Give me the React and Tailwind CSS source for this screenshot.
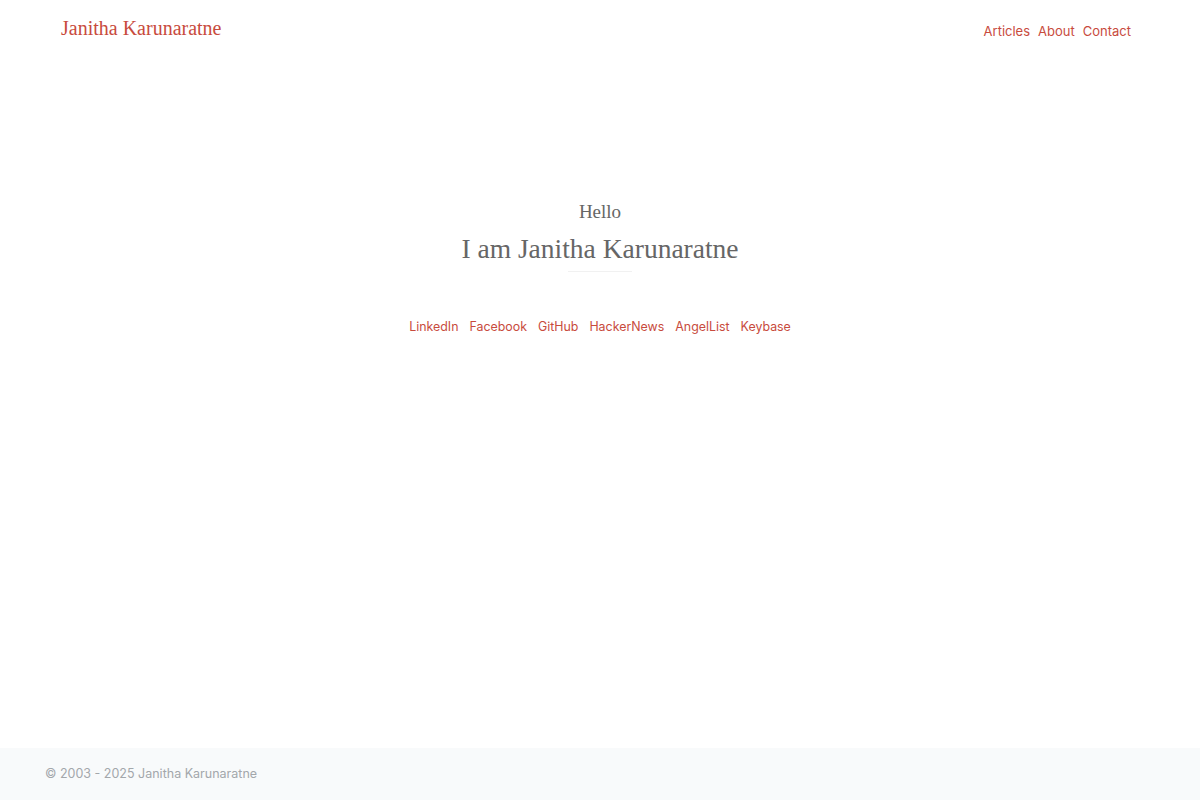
const sans = { fontFamily: "Inter, 'Noto Sans', sans-serif" };
const serif = { fontFamily: "'Liberation Serif', 'DejaVu Serif', serif" };

const links = ["LinkedIn", "Facebook", "GitHub", "HackerNews", "AngelList", "Keybase"];

export default function App() {
  return (
    <div className="min-h-screen flex flex-col bg-white" style={sans}>
      <header className="flex items-start justify-between pl-[61px] pr-[69px] pt-[13px]">
        <a href="#" className="text-[20px] text-[#c84b3d]" style={serif}>
          Janitha Karunaratne
        </a>
        <nav className="flex gap-2 pt-[9px] text-[13px] text-[#c84b3d]">
          <a href="#">Articles</a>
          <a href="#">About</a>
          <a href="#">Contact</a>
        </nav>
      </header>

      <main className="flex-1 flex flex-col items-center pt-[155px]">
        <h2 className="text-[19px] text-[#666]" style={serif}>
          Hello
        </h2>
        <h1 className="mt-px text-[27.5px] text-[#666]" style={serif}>
          I am Janitha Karunaratne
        </h1>
        <div className="mt-[2px] w-[64px] h-px bg-[#f1f1f1]" />
        <div className="mt-[46px] flex gap-[11px] text-[12.4px] text-[#c84b3d]">
          {links.map((l) => (
            <a key={l} href="#">
              {l}
            </a>
          ))}
        </div>
      </main>

      <footer className="h-[52px] bg-[#f8fafb] flex items-center pl-[45px]">
        <p className="text-[12.5px] text-[#a3a7ab]">© 2003 - 2025 Janitha Karunaratne</p>
      </footer>
    </div>
  );
}
